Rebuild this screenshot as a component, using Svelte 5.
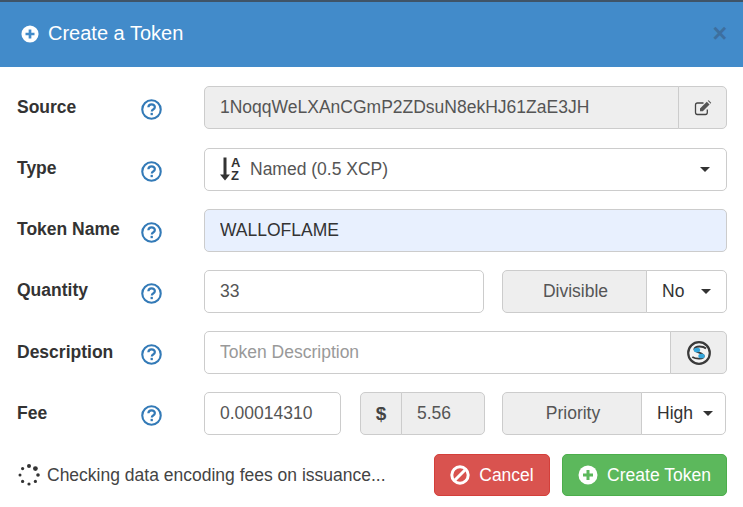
<script>
	let tokenName = 'WALLOFLAME'
	let quantity = '33'
	let fee = '0.00014310'

	const dots = [
		[12, 3, 2], [18.4, 5.6, 2.4], [21, 12, 1.8], [18.4, 18.4, 1.6], [12, 21, 1.6],
		[5.6, 18.4, 1.6], [3, 12, 1.5], [5.6, 5.6, 1.6]
	]
</script>

{#snippet help()}
	<svg class="help" viewBox="0 0 20 20" aria-hidden="true">
		<circle cx="10" cy="10" r="8.8" fill="none" stroke="#337ab7" stroke-width="2" />
		<path d="M7 7.900c.1-1.800 1.400-2.800 3.100-2.800 1.800 0 3.100 1.100 3.100 2.500 0 1.300-.8 1.900-1.600 2.400-.8.500-1.300.9-1.300 1.800" fill="none" stroke="#337ab7" stroke-width="2.100" />
		<rect x="9.100" y="13.200" width="2.200" height="2.200" fill="#337ab7" />
	</svg>
{/snippet}

{#snippet plus(fg)}
	<svg class="plus" viewBox="0 0 20 20" aria-hidden="true">
		<circle cx="10" cy="10" r="9.500" fill="#fff" />
		<path d="M10 5v10M5 10h10" stroke={fg} stroke-width="3" />
	</svg>
{/snippet}

<div class="modal">
	<header>
		{@render plus('#428bca')}
		<h4>Create a Token</h4>
		<span class="close">×</span>
	</header>

	<form>
		<div class="row">
			<label for="source">Source</label>
			{@render help()}
			<div class="group fill">
				<div id="source" class="field readonly fill">1NoqqWeLXAnCGmP2ZDsuN8ekHJ61ZaE3JH</div>
				<div class="addon end">
					<svg width="18" height="16" viewBox="0 0 18 16" aria-hidden="true">
						<path d="M9.500 3H3.400C2.200 3 1.500 3.800 1.500 4.900v7.700c0 1.100.7 1.900 1.900 1.900h8c1.100 0 1.900-.8 1.900-1.900V9.500" fill="none" stroke="#444" stroke-width="1.300" />
						<path d="M6 8.500 12.800 1.700l2.800 2.800-6.800 6.800H6z" fill="#555" />
						<path d="M13.800.8l.9-.5 2.500 2.500-.6 1z" fill="#555" />
					</svg>
				</div>
			</div>
		</div>

		<div class="row">
			<label for="type">Type</label>
			{@render help()}
			<div id="type" class="field fill select">
				<svg class="sort" width="28" height="28" viewBox="0 0 28 28" aria-hidden="true">
					<path d="M4.500 2.500h3v17h3.500l-5 6-5-6h3.500z" fill="#333" />
					<text x="12" y="11.500" class="az">A</text>
					<text x="12" y="25" class="az">Z</text>
				</svg>
				<span class="fill">Named (0.5 XCP)</span>
				<span class="caret"></span>
			</div>
		</div>

		<div class="row">
			<label for="name">Token Name</label>
			{@render help()}
			<input id="name" class="field fill autofill" bind:value={tokenName} />
		</div>

		<div class="row">
			<label for="qty">Quantity</label>
			{@render help()}
			<input id="qty" class="field qty" bind:value={quantity} />
			<div class="group side">
				<div class="addon caption">Divisible</div>
				<div class="dropdown divisible">No <span class="caret"></span></div>
			</div>
		</div>

		<div class="row">
			<label for="desc">Description</label>
			{@render help()}
			<div class="group fill">
				<input id="desc" class="field fill" placeholder="Token Description" />
				<div class="addon end wide">
					<svg width="26" height="26" viewBox="0 0 26 26" aria-hidden="true">
						<circle cx="13" cy="13" r="10.800" fill="#f4f4f4" stroke="#3a3a3a" stroke-width="2.200" />
						<path d="M20 8.500c-2.800-2.600-11-3-11.700.7-.5 3 9.300 3.200 9.500 6.900.1 3.200-7.500 3.300-11.500.9" fill="none" stroke="#3a3a3a" stroke-width="1.800" />
						<ellipse cx="11" cy="10" rx="3.200" ry="2.300" fill="#35a7dc" />
						<ellipse cx="15.500" cy="16" rx="3.200" ry="2.300" fill="#35a7dc" />
					</svg>
				</div>
			</div>
		</div>

		<div class="row">
			<label for="fee">Fee</label>
			{@render help()}
			<input id="fee" class="field fee" bind:value={fee} />
			<div class="group usd">
				<div class="addon dollar">$</div>
				<div class="field readonly fill">5.56</div>
			</div>
			<div class="group priority">
				<div class="addon caption">Priority</div>
				<div class="dropdown high">High <span class="caret"></span></div>
			</div>
		</div>

		<footer>
			<svg class="spinner" width="24" height="24" viewBox="0 0 24 24" aria-hidden="true">
				{#each dots as [x, y, r]}
					<circle cx={x} cy={y} {r} fill="#333" />
				{/each}
			</svg>
			<span class="status fill">Checking data encoding fees on issuance...</span>
			<button type="button" class="btn cancel">
				<svg class="plus" viewBox="0 0 20 20" aria-hidden="true">
					<circle cx="10" cy="10" r="8.200" fill="none" stroke="#fff" stroke-width="3" />
					<path d="M5 15 15 5" stroke="#fff" stroke-width="3" />
				</svg>
				Cancel
			</button>
			<button type="button" class="btn create">
				{@render plus('#5cb85c')}
				Create Token
			</button>
		</footer>
	</form>
</div>

<style>
	:global(body) {
		margin: 0;
		background: #fff;
	}

	.modal {
		width: 743px;
		height: 507px;
		overflow: hidden;
		border-top: 2px solid #3f5468;
		box-sizing: border-box;
		font-family: "Liberation Sans", Arial, sans-serif;
		font-size: 17.500px;
		color: #555;
	}

	header {
		height: 65px;
		box-sizing: border-box;
		padding: 0 16px 2px 21px;
		display: flex;
		align-items: center;
		gap: 9px;
		background: #428bca;
		color: #fff;
	}

	header .plus {
		width: 18px;
		height: 18px;
	}

	h4 {
		flex: 1;
		margin: 0;
		font-size: 20px;
		font-weight: 400;
	}

	.close {
		font-size: 25px;
		font-weight: 700;
		color: #3d6f9f;
		line-height: 1;
	}

	form {
		padding: 19.400px 16px 0 17px;
	}

	.row {
		display: flex;
		align-items: center;
		height: 43px;
		margin-bottom: 18.200px;
	}

	label {
		width: 124px;
		font-weight: 700;
		font-size: 17.500px;
		color: #333;
		margin-top: -1px;
	}

	.help {
		width: 21px;
		height: 21px;
		margin: 4px 42.500px 0 -0.500px;
	}

	.fill {
		flex: 1;
		min-width: 0;
	}

	.field {
		height: 43px;
		box-sizing: border-box;
		display: flex;
		align-items: center;
		padding: 0 15px;
		border: 1px solid #ccc;
		border-radius: 5px;
		background: #fff;
		font: inherit;
		color: #555;
		outline: none;
	}

	input::placeholder {
		color: #999;
		opacity: 1;
	}

	.readonly {
		background: #eee;
	}

	.autofill {
		background: #e8f0fe;
		color: #333;
	}

	.group {
		display: flex;
		height: 43px;
	}

	.group .field {
		border-radius: 5px 0 0 5px;
	}

	.addon {
		height: 43px;
		box-sizing: border-box;
		display: flex;
		align-items: center;
		justify-content: center;
		background: #eee;
		border: 1px solid #ccc;
		border-radius: 5px 0 0 5px;
	}

	.addon.end {
		width: 49px;
		margin-left: -1px;
		border-radius: 0 5px 5px 0;
	}

	.addon.wide {
		width: 57px;
	}

	.select {
		padding: 0 15px 0 14px;
		color: #555;
	}

	.sort {
		margin-right: 3px;
	}

	.az {
		font-family: "Liberation Sans", Arial, sans-serif;
		font-size: 13px;
		font-weight: 700;
		fill: #333;
	}

	.caret {
		display: inline-block;
		width: 0;
		height: 0;
		margin-left: 5px;
		border-top: 5px solid #333;
		border-left: 5px solid transparent;
		border-right: 5px solid transparent;
		vertical-align: middle;
	}

	.select .caret {
		margin-right: 1px;
	}

	.qty {
		width: 280px;
	}

	.side {
		margin-left: 18px;
		width: 225px;
	}

	.caption {
		flex: 1;
		padding-left: 2px;
	}

	.dropdown {
		height: 43px;
		box-sizing: border-box;
		display: flex;
		align-items: center;
		justify-content: space-between;
		margin-left: -1px;
		padding: 0 15px;
		border: 1px solid #ccc;
		border-radius: 0 5px 5px 0;
		background: #fff;
		color: #333;
	}

	.divisible {
		width: 81px;
	}

	.fee {
		width: 137px;
	}

	.usd {
		margin-left: 19px;
		width: 125px;
	}

	.dollar {
		width: 42px;
		font-weight: 700;
		font-size: 19px;
		color: #444;
	}

	.usd .field {
		margin-left: -1px;
		border-radius: 0 5px 5px 0;
	}

	.priority {
		margin-left: 17px;
		width: 224px;
	}

	.high {
		width: 85px;
		padding: 0 12px 0 15px;
	}

	footer {
		display: flex;
		align-items: center;
		height: 43px;
		margin-top: 18px;
	}

	.spinner {
		margin-right: 6px;
	}

	.status {
		color: #444;
		font-size: 17.500px;
	}

	.btn {
		height: 42px;
		display: flex;
		align-items: center;
		justify-content: center;
		gap: 9px;
		padding: 0;
		border: 1px solid transparent;
		border-radius: 5px;
		font: inherit;
		color: #fff;
	}

	.btn .plus {
		width: 20px;
		height: 20px;
	}

	.cancel {
		width: 116px;
		background: #d9534f;
		border-color: #d43f3a;
	}

	.create {
		width: 165px;
		margin-left: 12px;
		background: #5cb85c;
		border-color: #4cae4c;
	}
</style>
